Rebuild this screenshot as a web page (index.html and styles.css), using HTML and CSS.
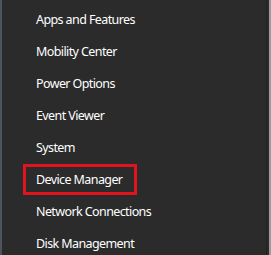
FILE: index.html
```html
<!DOCTYPE html>
<html lang="en">
<head>
    <meta charset="UTF-8">
    <title>Quick Link Menu</title>
    <link rel="stylesheet" href="styles.css">
</head>
<body>
    <div class="desktop-left"></div>
    <div class="menu">
        <div class="item">Apps and Features</div>
        <div class="item">Mobility Center</div>
        <div class="item">Power Options</div>
        <div class="item">Event Viewer</div>
        <div class="item">System</div>
        <div class="item marked">Device Manager</div>
        <div class="item">Network Connections</div>
        <div class="item">Disk Management</div>
    </div>
    <div class="shadow"></div>
    <div class="desktop-right"></div>
</body>
</html>
```

FILE: styles.css
```css
html, body {
    margin: 0;
    height: 100%;
    overflow: hidden;
}

body {
    display: flex;
    background: #2b2b2b;
    font-family: "Segoe UI", "Noto Sans", sans-serif;
}

.desktop-left {
    width: 2px;
    background: #4d545c;
}

.menu {
    flex: 1;
    background: #2b2b2b;
    border-right: 1px solid #222222;
    padding-top: 4px;
}

.item {
    position: relative;
    height: 32px;
    line-height: 32px;
    padding-left: 34px;
    color: #ffffff;
    font-size: 12.5px;
    letter-spacing: -0.6px;
    white-space: nowrap;
}

/* red highlight drawn around the item */
.item.marked::after {
    content: "";
    position: absolute;
    left: 21px;
    top: 0;
    width: 108px;
    height: 25px;
    border: 3px solid #e0131e;
}

.shadow {
    width: 2px;
    background: #2b2b2b;
}

.desktop-right {
    width: 2px;
    background: #9c9c9c;
}
```
